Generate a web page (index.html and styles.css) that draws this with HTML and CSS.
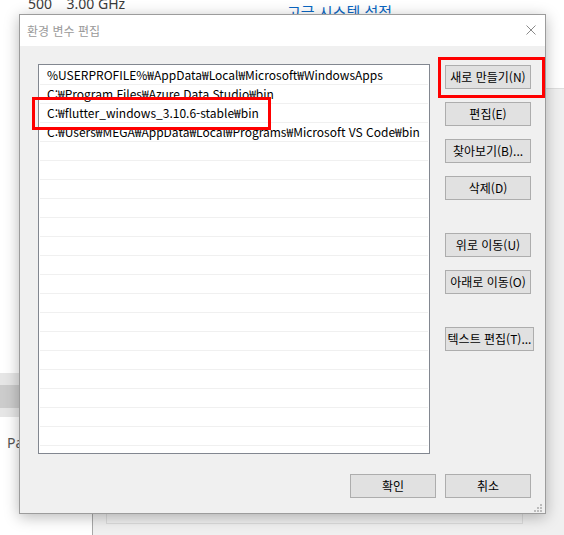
FILE: index.html
```html
<!DOCTYPE html>
<html lang="ko">
<head>
<meta charset="utf-8">
<title>환경 변수 편집</title>
<link rel="stylesheet" href="styles.css">
</head>
<body>
<div class="desk">
  <div class="bg-cpu">500&nbsp;&nbsp;&nbsp; 3.00 GHz</div>
  <div class="bg-link">고급 시스템 설정</div>
  <div class="bg-scroll">
    <div class="band band-light1"></div>
    <div class="band band-dark"></div>
    <div class="band band-light2"></div>
  </div>
  <div class="bg-pa">Pa</div>
  <div class="sysprop"><div class="groupbox"></div></div>

  <div class="dialog">
    <div class="titlebar">
      <span class="title">환경 변수 편집</span>
      <svg class="close" width="10" height="10" viewBox="0 0 10 10"><path d="M0.5 0.5 L9.5 9.5 M9.5 0.5 L0.5 9.5" stroke="#8a8a8a" stroke-width="1" fill="none"/></svg>
    </div>
    <div class="content">
      <div class="main">
        <div class="list">
          <div class="row">%USERPROFILE%₩AppData₩Local₩Microsoft₩WindowsApps</div>
          <div class="row">C:₩Program Files₩Azure Data Studio₩bin</div>
          <div class="row">C:₩flutter_windows_3.10.6-stable₩bin</div>
          <div class="row">C:₩Users₩MEGA₩AppData₩Local₩Programs₩Microsoft VS Code₩bin</div>
          <div class="row"></div><div class="row"></div><div class="row"></div><div class="row"></div>
          <div class="row"></div><div class="row"></div><div class="row"></div><div class="row"></div>
          <div class="row"></div><div class="row"></div><div class="row"></div><div class="row"></div>
          <div class="row"></div><div class="row"></div><div class="row"></div><div class="row"></div>
        </div>
        <div class="side">
          <button class="btn">새로 만들기(N)</button>
          <button class="btn">편집(E)</button>
          <button class="btn">찾아보기(B)...</button>
          <button class="btn">삭제(D)</button>
          <button class="btn group">위로 이동(U)</button>
          <button class="btn">아래로 이동(O)</button>
          <button class="btn group wide">텍스트 편집(T)...</button>
        </div>
      </div>
      <div class="footer">
        <button class="btn">확인</button>
        <button class="btn">취소</button>
      </div>
    </div>
    <svg class="grip" width="8" height="8" viewBox="0 0 8 8">
      <rect x="6" y="0" width="2" height="2" fill="#bcbcbc"/>
      <rect x="3" y="3" width="2" height="2" fill="#bcbcbc"/>
      <rect x="6" y="3" width="2" height="2" fill="#bcbcbc"/>
      <rect x="0" y="6" width="2" height="2" fill="#bcbcbc"/>
      <rect x="3" y="6" width="2" height="2" fill="#bcbcbc"/>
      <rect x="6" y="6" width="2" height="2" fill="#bcbcbc"/>
    </svg>
  </div>

  <div class="mark mark-row"></div>
  <div class="mark mark-btn"></div>
</div>
</body>
</html>
```

FILE: styles.css
```css
* { box-sizing: border-box; }
html, body { margin: 0; padding: 0; }
body {
  width: 564px;
  height: 535px;
  overflow: hidden;
  background: #ffffff;
  font-family: "Noto Sans CJK KR", "Noto Sans", sans-serif;
  font-size: 12px;
  color: #000;
}
.desk {
  position: relative;
  width: 564px;
  height: 535px;
  overflow: hidden;
  background: #ffffff;
}

/* background windows */
.bg-cpu {
  position: absolute;
  left: 28px;
  top: -4px;
  font-family: "Noto Sans", sans-serif;
  font-size: 14px;
  line-height: 16px;
  color: #3a3a3a;
  white-space: nowrap;
}
.bg-link {
  position: absolute;
  left: 287px;
  top: 2px;
  font-size: 15px;
  line-height: 20px;
  color: #0a66c2;
  white-space: nowrap;
}
.bg-scroll {
  position: absolute;
  left: 0;
  top: 373px;
  width: 120px;
  display: flex;
  flex-direction: column;
}
.band-light1 { height: 12px; background: #e6e6e6; }
.band-dark { height: 23px; background: #cccccc; }
.band-light2 { height: 9px; background: #e6e6e6; }
.bg-pa {
  position: absolute;
  left: 7px;
  top: 434px;
  font-family: "Noto Sans", sans-serif;
  font-size: 14px;
  line-height: 18px;
  color: #555;
}
.sysprop {
  position: absolute;
  left: 92px;
  top: 88px;
  width: 500px;
  height: 470px;
  background: #f0f0f0;
  border-left: 1px solid #a8a8a8;
  border-top: 1px solid #dedede;
}
.groupbox {
  position: absolute;
  left: 13px;
  top: 199px;
  width: 417px;
  height: 236px;
  border: 1px solid #dcdcdc;
}

/* dialog */
.dialog {
  position: absolute;
  left: 19px;
  top: 14px;
  width: 527px;
  height: 500px;
  border: 1px solid #9c9c9c;
  background: #f0f0f0;
  box-shadow: 0 3px 14px rgba(0, 0, 0, 0.28);
  display: flex;
  flex-direction: column;
}
.titlebar {
  height: 31px;
  flex: none;
  background: #ffffff;
  display: flex;
  align-items: center;
  justify-content: space-between;
  padding: 0 9px 0 7px;
}
.title {
  font-size: 12px;
  color: #9a9a9a;
  line-height: 16px;
}
.close { display: block; margin-top: -1px; }
.content {
  flex: 1;
  padding: 18px 14px 0 18px;
  display: flex;
  flex-direction: column;
}
.main {
  display: flex;
  gap: 15px;
}
.list {
  width: 392px;
  height: 390px;
  flex: none;
  background: #ffffff;
  border: 1px solid #828790;
  padding: 1px;
  overflow: hidden;
}
.row {
  height: 19px;
  border-bottom: 1px solid #f0f0f0;
  padding-left: 7px;
  line-height: 18px;
  font-size: 12px;
  white-space: nowrap;
  overflow: hidden;
}
.side {
  display: flex;
  flex-direction: column;
  align-items: flex-start;
  gap: 13px;
  padding-top: 1px;
}
.btn {
  width: 86px;
  height: 24px;
  padding: 0;
  margin: 0;
  background: #e1e1e1;
  border: 1px solid #adadad;
  border-radius: 0;
  font-family: "Noto Sans CJK KR", "Noto Sans", sans-serif;
  font-size: 12px;
  line-height: 20px;
  color: #000;
  text-align: center;
  white-space: nowrap;
}
.btn.group { margin-top: 20px; }
.btn.wide { width: 89px; }
.footer {
  display: flex;
  justify-content: flex-end;
  gap: 9px;
  margin-top: 20px;
}
.grip {
  position: absolute;
  right: 3px;
  bottom: 1px;
}

/* annotation marks */
.mark {
  position: absolute;
  border: 3px solid #ff0000;
}
.mark-row {
  left: 32px;
  top: 97px;
  width: 239px;
  height: 33px;
}
.mark-btn {
  left: 438px;
  top: 57px;
  width: 107px;
  height: 41px;
}
```
